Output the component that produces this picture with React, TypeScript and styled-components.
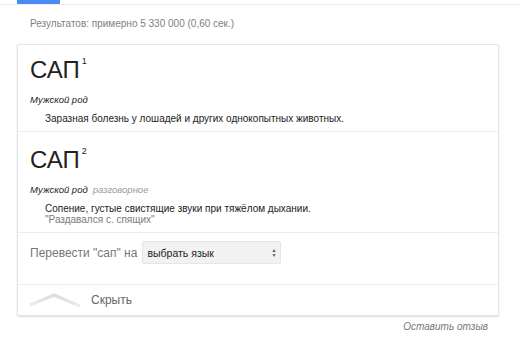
import React from 'react';
import styled, { createGlobalStyle } from 'styled-components';

interface Entry {
  word: string;
  index: number;
  gender: string;
  label?: string;
  definition: string;
  example?: string;
}

const entries: Entry[] = [
  {
    word: 'САП',
    index: 1,
    gender: 'Мужской род',
    definition: 'Заразная болезнь у лошадей и других однокопытных животных.',
  },
  {
    word: 'САП',
    index: 2,
    gender: 'Мужской род',
    label: 'разговорное',
    definition: 'Сопение, густые свистящие звуки при тяжёлом дыхании.',
    example: '"Раздавался с. спящих"',
  },
];

const GlobalStyle = createGlobalStyle`
  body {
    margin: 0;
    background: #fff;
    font-family: "Liberation Sans", Arial, sans-serif;
  }
`;

const TabBar = styled.div`
  height: 4px;
  border-bottom: 1px solid #ececec;
  padding-left: 17px;
`;

const ActiveTab = styled.div`
  width: 43px;
  height: 4px;
  background: #4a8af4;
`;

const Stats = styled.div`
  padding: 12px 0 0 30px;
  height: 27px;
  font-size: 10px;
  line-height: 13px;
  color: #808080;
`;

const Card = styled.div`
  width: 480px;
  margin-left: 17px;
  border: 1px solid #e6e6e6;
  border-radius: 2px;
  box-shadow: 0 1px 2px rgba(0, 0, 0, 0.14);
  background: #fff;
`;

const Section = styled.div`
  padding: 14px 12px 7px;
  border-bottom: 1px solid #ededed;

  &:first-child {
    padding-top: 11px;
  }
`;

const Word = styled.div`
  font-size: 24px;
  line-height: 28px;
  color: #222;
`;

const Index = styled.sup`
  font-size: 9px;
  line-height: 11px;
  vertical-align: top;
  margin-left: 2px;
`;

const Gender = styled.div`
  margin-top: 9px;
  font-size: 9.5px;
  line-height: 14px;
  font-style: italic;
  color: #222;
`;

const Label = styled.span`
  margin-left: 5px;
  color: #9a9a9a;
`;

const Definition = styled.div`
  margin-top: 6px;
  padding-left: 15px;
  font-size: 10px;
  line-height: 11px;
  color: #222;
`;

const Example = styled.div`
  padding-left: 15px;
  font-size: 10px;
  line-height: 11px;
  color: #7a7a7a;
`;

const TranslateRow = styled.div`
  display: flex;
  align-items: center;
  gap: 5px;
  padding: 8px 12px 20px;
  border-bottom: 1px solid #ededed;
  font-size: 12px;
  color: #777;
`;

const Select = styled.div`
  display: flex;
  align-items: center;
  justify-content: space-between;
  width: 129px;
  height: 21px;
  padding: 0 4px;
  background: #f2f2f2;
  border: 1px solid #e6e6e6;
  border-radius: 2px;
  font-size: 10.5px;
  color: #222;
`;

const Arrows = styled.span`
  display: flex;
  flex-direction: column;
  font-size: 5px;
  line-height: 5px;
  color: #555;
`;

const HideRow = styled.div`
  display: flex;
  align-items: center;
  gap: 10px;
  height: 30px;
  padding-left: 11px;
  font-size: 12px;
  color: #666;
`;

const Feedback = styled.div`
  width: 488px;
  margin-top: 5px;
  text-align: right;
  font-size: 10px;
  font-style: italic;
  color: #777;
`;

const Chevron: React.FC = () => (
  <svg width="52" height="16" viewBox="0 0 52 16">
    <defs>
      <linearGradient id="fade" x1="0" x2="1" y1="0" y2="0">
        <stop offset="0" stopColor="#ececec" />
        <stop offset="0.5" stopColor="#dcdcdc" />
        <stop offset="1" stopColor="#ececec" />
      </linearGradient>
    </defs>
    <path d="M1 13 L25 3 L51 14" fill="none" stroke="url(#fade)" strokeWidth="3.5" strokeLinejoin="round" />
  </svg>
);

const App: React.FC = () => {
  return (
    <>
      <GlobalStyle />
      <TabBar>
        <ActiveTab />
      </TabBar>
      <Stats>Результатов: примерно 5 330 000 (0,60 сек.)</Stats>
      <Card>
        {entries.map((entry) => (
          <Section key={entry.index}>
            <Word>
              {entry.word}
              <Index>{entry.index}</Index>
            </Word>
            <Gender>
              {entry.gender}
              {entry.label && <Label>{entry.label}</Label>}
            </Gender>
            <Definition>{entry.definition}</Definition>
            {entry.example && <Example>{entry.example}</Example>}
          </Section>
        ))}
        <TranslateRow>
          Перевести "сап" на
          <Select>
            выбрать язык
            <Arrows>
              <span>▲</span>
              <span>▼</span>
            </Arrows>
          </Select>
        </TranslateRow>
        <HideRow>
          <Chevron />
          Скрыть
        </HideRow>
      </Card>
      <Feedback>Оставить отзыв</Feedback>
    </>
  );
};

export default App;
